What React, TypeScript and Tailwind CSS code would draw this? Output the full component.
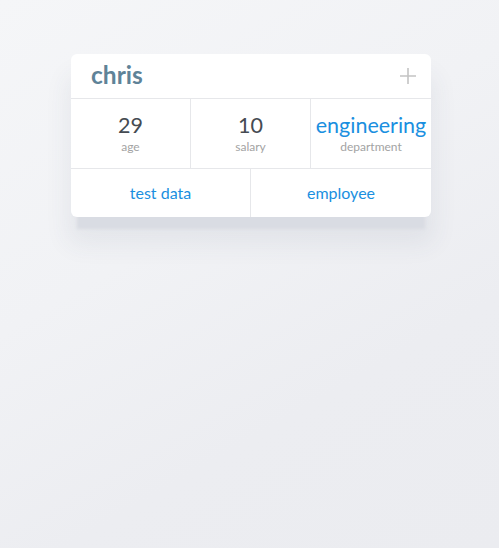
import React from 'react';

const stats = [
  { value: '29', label: 'age', accent: false },
  { value: '10', label: 'salary', accent: false },
  { value: 'engineering', label: 'department', accent: true },
];

const tags = ['test data', 'employee'];

export default function App() {
  return (
    <div className="h-[548px] w-full bg-[linear-gradient(150deg,#f5f6f8_0%,#f1f2f5_40%,#ecedf1_70%,#ebecf0_100%)] font-['Lato','Noto_Sans',sans-serif] pt-[54px] pl-[71px]">
      <div className="w-[360px] rounded-[6px] bg-white shadow-[0_18px_3px_-6px_#d9dce3,0_24px_24px_4px_rgba(60,70,100,0.07)]">
        {/* header */}
        <div className="flex h-[45px] items-center justify-between border-b border-[#e6e7ea] pl-[20px] pr-[14px]">
          <span className="text-[24.5px] font-bold leading-none text-[#5f8398] pb-[1px]">chris</span>
          <svg width="18" height="18" viewBox="0 0 18 18" className="text-[#c4c4c4]">
            <path d="M9 1v16M1 9h16" stroke="currentColor" strokeWidth="1.6" />
          </svg>
        </div>

        {/* stats */}
        <div className="grid h-[70px] grid-cols-3 border-b border-[#e6e7ea]">
          {stats.map((s, i) => (
            <div
              key={s.label}
              className={`flex flex-col items-center justify-center pb-[3px] ${i < 2 ? 'border-r border-[#e6e7ea]' : ''}`}
            >
              <span className={`text-[21.5px] leading-[29px] ${s.accent ? 'text-[#1a8fe0]' : 'text-[#454b52]'}`}>
                {s.value}
              </span>
              <span className="text-[12px] leading-[14px] text-[#a3a3a3]">{s.label}</span>
            </div>
          ))}
        </div>

        {/* tags */}
        <div className="grid h-[48px] grid-cols-2">
          {tags.map((t, i) => (
            <div
              key={t}
              className={`flex items-center justify-center pb-[1px] text-[16px] text-[#1a8fe0] ${i === 0 ? 'border-r border-[#e6e7ea]' : ''}`}
            >
              {t}
            </div>
          ))}
        </div>
      </div>
    </div>
  );
}
